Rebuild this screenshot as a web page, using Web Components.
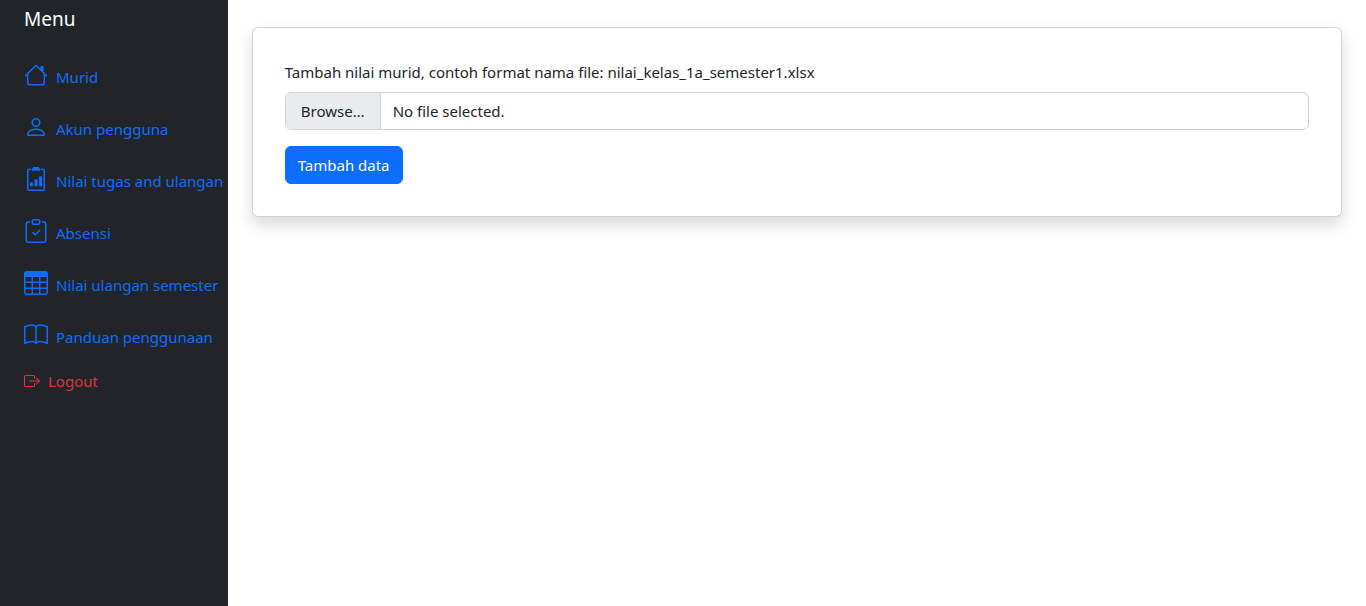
<!DOCTYPE html>
<html lang="id">
<head>
<meta charset="utf-8">
<title>Tambah nilai</title>
<style>
body { margin: 0; font: 15px/24px "Noto Sans", "Open Sans", sans-serif; color: #212529; background: #fff; }
</style>
</head>
<body>
<school-app></school-app>
<script>
const ICONS = {
  house: '<path d="M8.707 1.5a1 1 0 0 0-1.414 0L.646 8.146a.5.5 0 0 0 .708.708L2 8.207V13.5A1.5 1.5 0 0 0 3.5 15h9a1.5 1.5 0 0 0 1.5-1.5V8.207l.646.647a.5.5 0 0 0 .708-.708L13 5.793V2.5a.5.5 0 0 0-.5-.5h-1a.5.5 0 0 0-.5.5v1.293L8.707 1.5ZM13 7.207V13.5a.5.5 0 0 1-.5.5h-9a.5.5 0 0 1-.5-.5V7.207l5-5 5 5Z"/>',
  person: '<path d="M8 8a3 3 0 1 0 0-6 3 3 0 0 0 0 6Zm2-3a2 2 0 1 1-4 0 2 2 0 0 1 4 0Zm4 8c0 1-1 1-1 1H3s-1 0-1-1 1-4 6-4 6 3 6 4Zm-1-.004c-.001-.246-.154-.986-.832-1.664C11.516 10.68 10.289 10 8 10c-2.29 0-3.516.68-4.168 1.332-.678.678-.83 1.418-.832 1.664h10Z"/>',
  report: '<path d="M9.5 0a.5.5 0 0 1 .5.5.5.5 0 0 0 .5.5.5.5 0 0 1 .5.5V2a.5.5 0 0 1-.5.5h-5A.5.5 0 0 1 5 2v-.5a.5.5 0 0 1 .5-.5.5.5 0 0 0 .5-.5.5.5 0 0 1 .5-.5h3Z"/><path d="M3 2.5a.5.5 0 0 1 .5-.5H4a.5.5 0 0 0 0-1h-.5A1.5 1.5 0 0 0 2 2.5v12A1.5 1.5 0 0 0 3.5 16h9a1.5 1.5 0 0 0 1.5-1.5v-12A1.5 1.5 0 0 0 12.5 1H12a.5.5 0 0 0 0 1h.5a.5.5 0 0 1 .5.5v12a.5.5 0 0 1-.5.5h-9a.5.5 0 0 1-.5-.5v-12Z"/><path d="M10 7a1 1 0 1 1 2 0v5a1 1 0 1 1-2 0V7Zm-6 4a1 1 0 1 1 2 0v1a1 1 0 1 1-2 0v-1Zm4-3a1 1 0 0 0-1 1v3a1 1 0 1 0 2 0V9a1 1 0 0 0-1-1Z"/>',
  check: '<path fill-rule="evenodd" d="M10.854 7.146a.5.5 0 0 1 0 .708l-3 3a.5.5 0 0 1-.708 0l-1.5-1.5a.5.5 0 1 1 .708-.708L7.5 9.793l2.646-2.647a.5.5 0 0 1 .708 0Z"/><path d="M4 1.5H3a2 2 0 0 0-2 2V14a2 2 0 0 0 2 2h10a2 2 0 0 0 2-2V3.5a2 2 0 0 0-2-2h-1v1h1a1 1 0 0 1 1 1V14a1 1 0 0 1-1 1H3a1 1 0 0 1-1-1V3.5a1 1 0 0 1 1-1h1v-1Z"/><path d="M9.5 1a.5.5 0 0 1 .5.5v1a.5.5 0 0 1-.5.5h-3a.5.5 0 0 1-.5-.5v-1a.5.5 0 0 1 .5-.5h3Zm-3-1A1.5 1.5 0 0 0 5 1.5v1A1.5 1.5 0 0 0 6.5 4h3A1.5 1.5 0 0 0 11 2.5v-1A1.5 1.5 0 0 0 9.5 0h-3Z"/>',
  table: '<path d="M0 2a2 2 0 0 1 2-2h12a2 2 0 0 1 2 2v12a2 2 0 0 1-2 2H2a2 2 0 0 1-2-2V2zm15 2h-4v3h4V4zm0 4h-4v3h4V8zm0 4h-4v3h3a1 1 0 0 0 1-1v-2zm-5 3v-3H6v3h4zm-5 0v-3H1v2a1 1 0 0 0 1 1h3zm-4-4h4V8H1v3zm0-4h4V4H1v3zm5-3v3h4V4H6zm4 4H6v3h4V8z"/>',
  book: '<path d="M1 2.828c.885-.37 2.154-.769 3.388-.893 1.33-.134 2.458.063 3.112.752v9.746c-.935-.53-2.12-.603-3.213-.493-1.18.12-2.37.461-3.287.811V2.828zm7.5-.141c.654-.689 1.782-.886 3.112-.752 1.234.124 2.503.523 3.388.893v9.923c-.918-.35-2.107-.692-3.287-.81-1.094-.111-2.278-.039-3.213.492V2.687zM8 1.783C7.015.936 5.587.81 4.287.94c-1.514.153-3.042.672-3.994 1.105A.5.5 0 0 0 0 2.5v11a.5.5 0 0 0 .707.455c.882-.4 2.303-.881 3.68-1.02 1.409-.142 2.59.087 3.223.877a.5.5 0 0 0 .78 0c.633-.79 1.814-1.019 3.222-.877 1.378.139 2.8.62 3.681 1.02A.5.5 0 0 0 16 13.5v-11a.5.5 0 0 0-.293-.455c-.952-.433-2.48-.952-3.994-1.105C10.413.809 8.985.936 8 1.783z"/>',
  logout: '<path fill-rule="evenodd" d="M10 12.5a.5.5 0 0 1-.5.5h-8a.5.5 0 0 1-.5-.5v-9a.5.5 0 0 1 .5-.5h8a.5.5 0 0 1 .5.5v2a.5.5 0 0 0 1 0v-2A1.5 1.5 0 0 0 9.5 2h-8A1.5 1.5 0 0 0 0 3.5v9A1.5 1.5 0 0 0 1.5 14h8a1.5 1.5 0 0 0 1.5-1.5v-2a.5.5 0 0 0-1 0v2z"/><path fill-rule="evenodd" d="M15.854 8.354a.5.5 0 0 0 0-.708l-3-3a.5.5 0 0 0-.708.708L14.293 7.5H5.5a.5.5 0 0 0 0 1h8.793l-2.147 2.146a.5.5 0 0 0 .708.708l3-3z"/>'
};

class MenuLink extends HTMLElement {
  connectedCallback() {
    const root = this.attachShadow({ mode: 'open' });
    root.innerHTML = `
      <style>
        :host { display: block; }
        a { display: flex; align-items: flex-start; gap: 8px; padding: 12px 0 14px; color: #0d6efd; text-decoration: none; white-space: nowrap; }
        svg { flex: none; width: 24px; height: 24px; fill: currentColor; }
        span { padding-top: 2px; }
        :host([variant="danger"]) a { align-items: center; padding: 6px 0; color: #dc3545; }
        :host([variant="danger"]) svg { width: 16px; height: 16px; }
        :host([variant="danger"]) span { padding: 0; }
      </style>
      <a href="#"><svg viewBox="0 0 16 16" aria-hidden="true">${ICONS[this.getAttribute('icon')]}</svg><span><slot></slot></span></a>`;
  }
}
customElements.define('menu-link', MenuLink);

class SideMenu extends HTMLElement {
  connectedCallback() {
    this.attachShadow({ mode: 'open' }).innerHTML = `
      <style>
        :host { display: block; padding: 3px 0 24px 24px; background: #212529; color: #fff; }
        h1 { margin: 0 0 16px; font-size: 19px; line-height: 32px; font-weight: 400; }
      </style>
      <h1>Menu</h1>
      <nav aria-label="Menu"><slot></slot></nav>`;
  }
}
customElements.define('side-menu', SideMenu);

class FilePicker extends HTMLElement {
  connectedCallback() {
    const root = this.attachShadow({ mode: 'open' });
    root.innerHTML = `
      <style>
        :host { display: block; }
        label { display: block; margin-bottom: 8px; }
        .field { position: relative; display: flex; border: 1px solid #ced4da; border-radius: 6px; overflow: hidden; background: #fff; }
        .field:focus-within { border-color: #86b7fe; }
        input { position: absolute; inset: 0; width: 100%; opacity: 0; cursor: pointer; }
        .browse { box-sizing: border-box; min-width: 95px; padding: 6px 12px; text-align: center; background: #e9ecef; border-right: 1px solid #ced4da; }
        .name { padding: 6px 12px; }
      </style>
      <label for="file"><slot></slot></label>
      <div class="field">
        <span class="browse" aria-hidden="true">Browse…</span>
        <span class="name">No file selected.</span>
        <input id="file" type="file" accept=".xlsx">
      </div>`;
    const input = root.querySelector('input');
    input.addEventListener('change', () => {
      root.querySelector('.name').textContent = input.files.length ? input.files[0].name : 'No file selected.';
    });
  }
}
customElements.define('file-picker', FilePicker);

class UploadCard extends HTMLElement {
  connectedCallback() {
    this.attachShadow({ mode: 'open' }).innerHTML = `
      <style>
        :host { display: block; padding: 32px; border: 1px solid rgba(0,0,0,.175); border-radius: 6px; background: #fff; box-shadow: 0 8px 16px rgba(0,0,0,.15); }
        form { display: flex; flex-direction: column; align-items: flex-start; gap: 16px; }
        file-picker { align-self: stretch; }
        button { padding: 6px 12px; border: 1px solid #0d6efd; border-radius: 6px; background: #0d6efd; color: #fff; font: inherit; cursor: pointer; }
      </style>
      <form>
        <file-picker>Tambah nilai murid, contoh format nama file: nilai_kelas_1a_semester1.xlsx</file-picker>
        <button type="button">Tambah data</button>
      </form>`;
  }
}
customElements.define('upload-card', UploadCard);

class SchoolApp extends HTMLElement {
  connectedCallback() {
    this.attachShadow({ mode: 'open' }).innerHTML = `
      <style>
        :host { display: grid; grid-template-columns: minmax(0, 1fr) minmax(0, 5fr); min-height: 100vh; }
        main { padding: 27px 24px; }
      </style>
      <side-menu>
        <menu-link icon="house">Murid</menu-link>
        <menu-link icon="person">Akun pengguna</menu-link>
        <menu-link icon="report">Nilai tugas and ulangan</menu-link>
        <menu-link icon="check">Absensi</menu-link>
        <menu-link icon="table">Nilai ulangan semester</menu-link>
        <menu-link icon="book">Panduan penggunaan</menu-link>
        <menu-link icon="logout" variant="danger">Logout</menu-link>
      </side-menu>
      <main><upload-card></upload-card></main>`;
  }
}
customElements.define('school-app', SchoolApp);
</script>
</body>
</html>
